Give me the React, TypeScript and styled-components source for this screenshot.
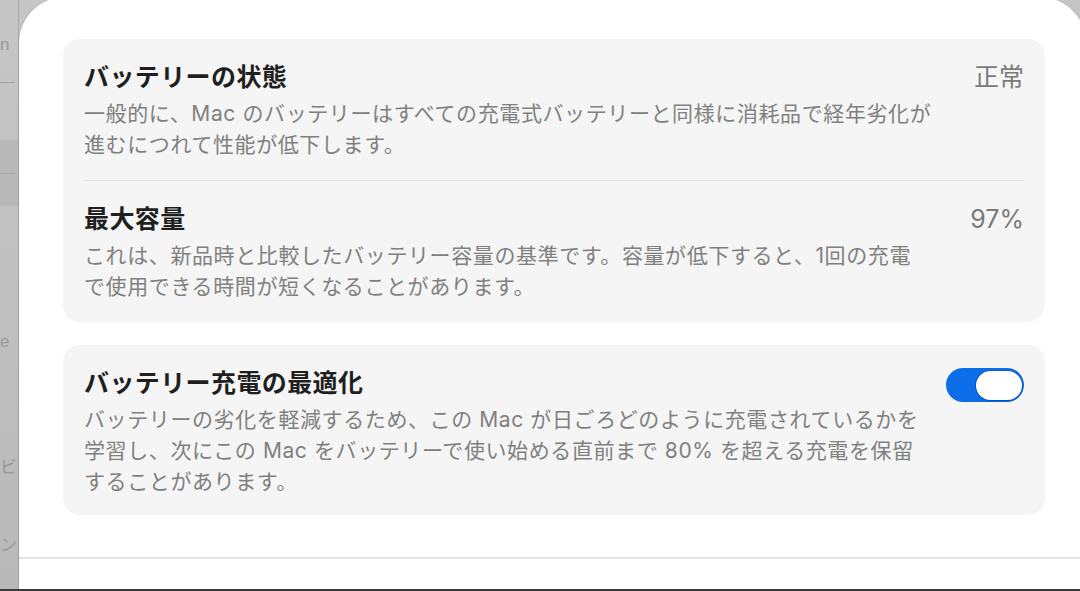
import React from "react";
import styled, { createGlobalStyle } from "styled-components";

const GlobalStyle = createGlobalStyle`
  html, body {
    margin: 0;
    padding: 0;
    width: 1080px;
    height: 591px;
    overflow: hidden;
    background: #c2c2c2;
  }
  body {
    font-family: "Inter", "Noto Sans CJK JP", sans-serif;
    -webkit-font-smoothing: antialiased;
  }
`;

const Screen = styled.div`
  width: 1080px;
  height: 591px;
  display: flex;
  flex-direction: column;
  background: linear-gradient(180deg, #c6c6c6 0%, #b9b9b9 100%);
  overflow: hidden;
`;

const Stage = styled.div`
  flex: 1;
  display: flex;
  min-height: 0;
`;

const Backdrop = styled.div`
  width: 18px;
  flex-shrink: 0;
  border-right: 1px solid #a9a9a9;
  display: flex;
  flex-direction: column;
  overflow: hidden;
`;

const BackdropRow = styled.div<{ $h: number; $band?: boolean }>`
  height: ${(p) => p.$h}px;
  flex-shrink: 0;
  display: flex;
  align-items: center;
  justify-content: flex-start;
  background: ${(p) => (p.$band ? "rgba(0,0,0,0.05)" : "transparent")};
`;

const BackdropRule = styled.div`
  width: 15px;
  height: 1px;
  background: #a3a3a3;
  flex-shrink: 0;
`;

const BackdropText = styled.span`
  white-space: nowrap;
  font-family: "Liberation Sans", "Noto Sans CJK JP", sans-serif;
  font-size: 17px;
  line-height: 20px;
  color: #999999;
`;

const Sheet = styled.div`
  flex: 1;
  margin-top: -3px;
  margin-right: -6px;
  background: #ffffff;
  border-radius: 46px 46px 0 0;
  box-shadow: 0 0 0 1px rgba(0, 0, 0, 0.06);
  display: flex;
  flex-direction: column;
  min-width: 0;
`;

const Content = styled.div`
  padding: 42px 0 0 44px;
  display: flex;
  flex-direction: column;
  gap: 23px;
`;

const Card = styled.section`
  width: 982px;
  box-sizing: border-box;
  background: #f5f5f5;
  border-radius: 17px;
  padding: 0 21px 0 21px;
  display: flex;
  flex-direction: column;
`;

const Row = styled.div<{ $divider?: boolean; $bottom?: number }>`
  display: flex;
  align-items: flex-start;
  justify-content: space-between;
  gap: 20px;
  padding: 23px 0 ${(p) => p.$bottom ?? 20}px;
  border-top: ${(p) => (p.$divider ? "1px solid #e2e2e2" : "none")};
`;

const Texts = styled.div`
  display: flex;
  flex-direction: column;
  gap: 6px;
`;

const Title = styled.h2`
  margin: 0;
  font-size: 25px;
  line-height: 30px;
  font-weight: 600;
  letter-spacing: 0.4px;
  color: #1f1f1f;
`;

const Description = styled.p`
  margin: 0;
  font-size: 21px;
  line-height: 31px;
  font-weight: 400;
  letter-spacing: 0.6px;
  color: #808080;
  white-space: nowrap;
`;

const Value = styled.span`
  font-size: 25px;
  line-height: 30px;
  color: #7a7a7a;
  white-space: nowrap;
`;

const Switch = styled.button<{ $on: boolean }>`
  flex-shrink: 0;
  width: 78px;
  height: 34px;
  border: none;
  padding: 0 2px;
  border-radius: 17px;
  background: ${(p) => (p.$on ? "#0d6ee9" : "#d9d9d9")};
  display: flex;
  align-items: center;
  justify-content: ${(p) => (p.$on ? "flex-end" : "flex-start")};
  cursor: pointer;
`;

const Knob = styled.span`
  width: 46px;
  height: 29px;
  border-radius: 15px;
  background: #ffffff;
  box-shadow: 0 0 0 1px rgba(0, 60, 160, 0.35), 0 1px 2px rgba(0, 0, 0, 0.2);
`;

const Footer = styled.div`
  margin-top: auto;
  height: 30px;
  border-top: 2px solid #e3e3e3;
  background: #ffffff;
`;

const BottomEdge = styled.div`
  height: 2px;
  background: #3a3a3a;
`;

export default function App() {
  return (
    <>
      <GlobalStyle />
      <Screen>
        <Stage>
          <Backdrop>
            <BackdropRow $h={34} />
            <BackdropRow $h={22}>
              <BackdropText>n</BackdropText>
            </BackdropRow>
            <BackdropRow $h={52}>
              <BackdropRule />
            </BackdropRow>
            <BackdropRow $h={32} />
            <BackdropRow $h={66} $band>
              <BackdropRule />
            </BackdropRow>
            <BackdropRow $h={125} />
            <BackdropRow $h={22}>
              <BackdropText>e</BackdropText>
            </BackdropRow>
            <BackdropRow $h={104} />
            <BackdropRow $h={22}>
              <BackdropText>ビ</BackdropText>
            </BackdropRow>
            <BackdropRow $h={56} />
            <BackdropRow $h={22}>
              <BackdropText>ン</BackdropText>
            </BackdropRow>
          </Backdrop>
          <Sheet>
            <Content>
              <Card>
                <Row>
                  <Texts>
                    <Title>バッテリーの状態</Title>
                    <Description>
                      一般的に、Mac のバッテリーはすべての充電式バッテリーと同様に消耗品で経年劣化が
                      <br />
                      進むにつれて性能が低下します。
                    </Description>
                  </Texts>
                  <Value>正常</Value>
                </Row>
                <Row $divider>
                  <Texts>
                    <Title>最大容量</Title>
                    <Description>
                      これは、新品時と比較したバッテリー容量の基準です。容量が低下すると、1回の充電
                      <br />
                      で使用できる時間が短くなることがあります。
                    </Description>
                  </Texts>
                  <Value>97%</Value>
                </Row>
              </Card>
              <Card>
                <Row $bottom={18}>
                  <Texts>
                    <Title>バッテリー充電の最適化</Title>
                    <Description>
                      バッテリーの劣化を軽減するため、この Mac が日ごろどのように充電されているかを
                      <br />
                      学習し、次にこの Mac をバッテリーで使い始める直前まで 80% を超える充電を保留
                      <br />
                      することがあります。
                    </Description>
                  </Texts>
                  <Switch $on aria-label="バッテリー充電の最適化">
                    <Knob />
                  </Switch>
                </Row>
              </Card>
            </Content>
            <Footer />
          </Sheet>
        </Stage>
        <BottomEdge />
      </Screen>
    </>
  );
}
